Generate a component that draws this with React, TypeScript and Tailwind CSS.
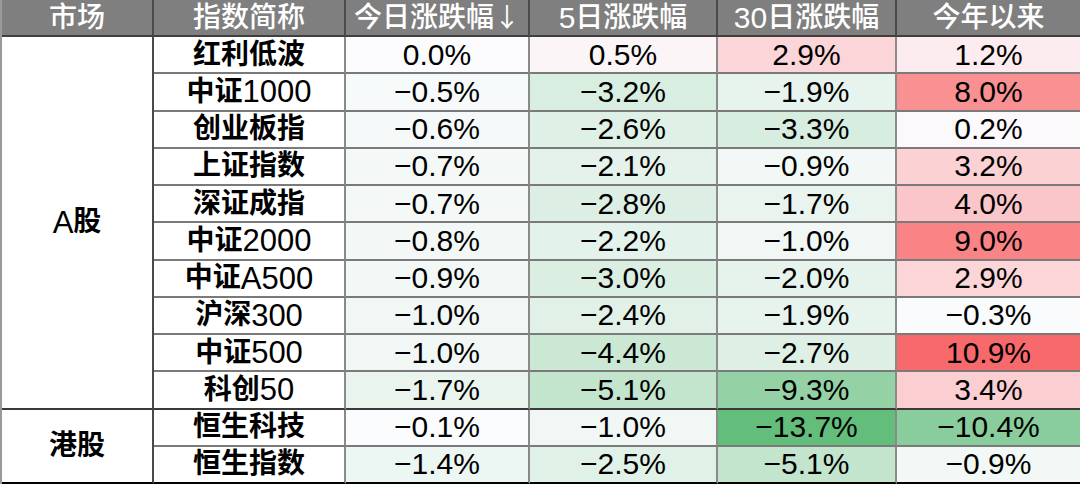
import React from "react"

type Row = { name: string; vals: number[] }

const aRows: Row[] = [
  { name: "红利低波", vals: [0.0, 0.5, 2.9, 1.2] },
  { name: "中证1000", vals: [-0.5, -3.2, -1.9, 8.0] },
  { name: "创业板指", vals: [-0.6, -2.6, -3.3, 0.2] },
  { name: "上证指数", vals: [-0.7, -2.1, -0.9, 3.2] },
  { name: "深证成指", vals: [-0.7, -2.8, -1.7, 4.0] },
  { name: "中证2000", vals: [-0.8, -2.2, -1.0, 9.0] },
  { name: "中证A500", vals: [-0.9, -3.0, -2.0, 2.9] },
  { name: "沪深300", vals: [-1.0, -2.4, -1.9, -0.3] },
  { name: "中证500", vals: [-1.0, -4.4, -2.7, 10.9] },
  { name: "科创50", vals: [-1.7, -5.1, -9.3, 3.4] },
]

const hkRows: Row[] = [
  { name: "恒生科技", vals: [-0.1, -1.0, -13.7, -10.4] },
  { name: "恒生指数", vals: [-1.4, -2.5, -5.1, -0.9] },
]

const MIN = -13.7
const MAX = 10.9
const WHITE = [252, 252, 255]
const GREEN = [99, 190, 123]
const RED = [248, 105, 107]

// three-colour scale: green (min) → white (0) → red (max)
function cellColor(v: number) {
  const to = v < 0 ? GREEN : RED
  const t = v < 0 ? v / MIN : v / MAX
  const c = WHITE.map((w, i) => Math.round(w + (to[i] - w) * t))
  return `rgb(${c[0]}, ${c[1]}, ${c[2]})`
}

function fmt(v: number) {
  const s = Math.abs(v).toFixed(1) + "%"
  return v < 0 ? "\u2212" + s : s
}

const font = "font-['Liberation_Sans','Noto_Sans_CJK_SC',sans-serif]"

// latin runs stay regular weight, CJK runs get the heavier weight
function Mixed({ text, cjk, latin = "font-normal" }: { text: string; cjk: string; latin?: string }) {
  const parts = text.match(/[\u4e00-\u9fff]+|[^\u4e00-\u9fff]+/g) ?? []
  return (
    <>
      {parts.map((p, i) =>
        /[\u4e00-\u9fff]/.test(p) ? (
          <span key={i} className={cjk}>
            {p}
          </span>
        ) : (
          <span key={i} className={latin}>
            {p}
          </span>
        ),
      )}
    </>
  )
}

function DataRow({ row, last, sep }: { row: Row; last?: boolean; sep?: boolean }) {
  const bottom = last
    ? "border-b-2 border-b-black"
    : sep
      ? "border-b-2 border-b-[#3a3a3a]"
      : "border-b-2 border-b-[#7a7a7a]"
  return (
    <>
      <div
        className={`flex items-center justify-center border-r-2 border-r-[#8a8a8a] bg-white text-[28px] leading-none text-black ${bottom} ${font}`}
      >
        <Mixed text={row.name} cjk="font-bold" latin="font-normal text-[31px]" />
      </div>
      {row.vals.map((v, i) => (
        <div
          key={i}
          className={`flex items-center justify-center text-[30px] leading-none text-black ${bottom} ${font} ${
            i < 3 ? "border-r-2 border-r-[#8a8a8a]" : "border-r border-r-[#404040]"
          }`}
          style={{ backgroundColor: cellColor(v) }}
        >
          {fmt(v)}
        </div>
      ))}
    </>
  )
}

function Head({ children, end }: { children: React.ReactNode; end?: boolean }) {
  return (
    <div
      className={`flex items-center justify-center border-b-2 border-b-[#3f3f3f] bg-[#7f7f7f] text-[28px] leading-none text-white ${font} ${
        end ? "border-r border-r-[#404040]" : "border-r-2 border-r-[#4a4a4a]"
      }`}
    >
      {children}
    </div>
  )
}

export default function App() {
  return (
    <div className="h-[485px] w-[1080px] bg-white">
      <div className="grid h-[484px] w-[1079px] grid-cols-[152px_192px_184px_188px_179px_184px] grid-rows-[37px_repeat(12,minmax(0,1fr))] border-l-2 border-l-[#9a9a9a]">
        <Head>
          <Mixed text="市场" cjk="font-medium" />
        </Head>
        <Head>
          <Mixed text="指数简称" cjk="font-medium" />
        </Head>
        <Head>
          <span className="whitespace-nowrap">
            <Mixed text="今日涨跌幅" cjk="font-medium" />
            <span className="font-['Noto_Sans_CJK_SC',sans-serif] text-[26px]">↓</span>
          </span>
        </Head>
        <Head>
          <Mixed text="5日涨跌幅" cjk="font-medium" latin="font-normal text-[30px]" />
        </Head>
        <Head>
          <Mixed text="30日涨跌幅" cjk="font-medium" latin="font-normal text-[30px]" />
        </Head>
        <Head end>
          <Mixed text="今年以来" cjk="font-medium" />
        </Head>

        <div
          className={`col-start-1 row-span-10 row-start-2 flex items-center justify-center border-b-2 border-r-2 border-b-[#3a3a3a] border-r-[#4a4a4a] bg-white text-[28px] leading-none text-black ${font}`}
        >
          <Mixed text="A股" cjk="font-bold" latin="font-normal text-[31px]" />
        </div>
        {aRows.map((r, i) => (
          <DataRow key={r.name} row={r} sep={i === aRows.length - 1} />
        ))}

        <div
          className={`col-start-1 row-span-2 row-start-12 flex items-center justify-center border-b-2 border-r-2 border-b-black border-r-[#4a4a4a] bg-white text-[28px] leading-none text-black ${font}`}
        >
          <Mixed text="港股" cjk="font-bold" />
        </div>
        {hkRows.map((r, i) => (
          <DataRow key={r.name} row={r} last={i === hkRows.length - 1} />
        ))}
      </div>
    </div>
  )
}
